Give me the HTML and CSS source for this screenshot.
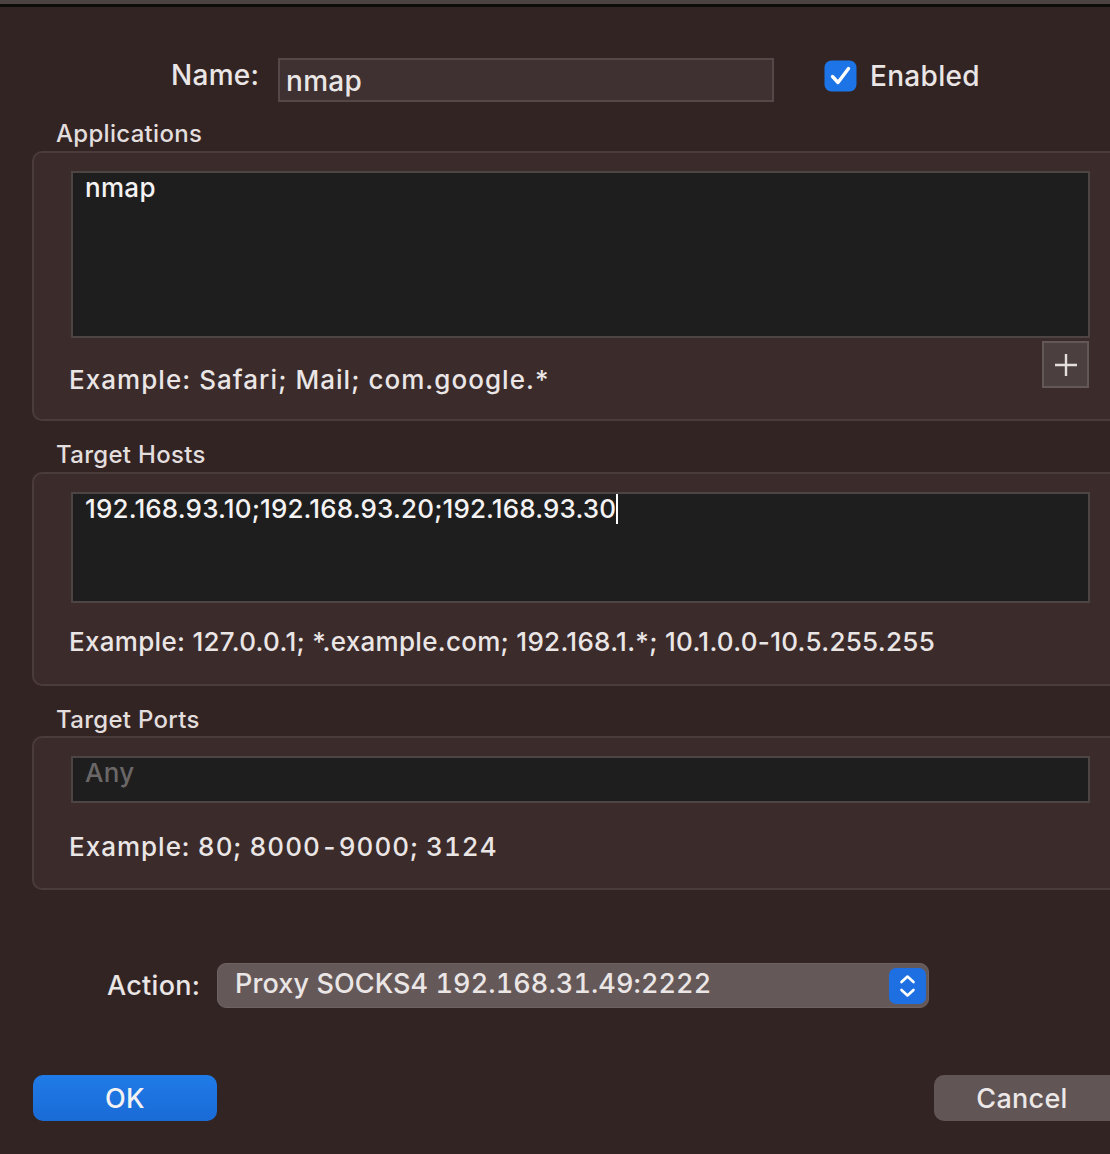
FILE: index.html
```html
<!DOCTYPE html>
<html>
<head>
<meta charset="utf-8">
<link rel="stylesheet" href="styles.css">
</head>
<body>
<div class="topbar"></div>
<div class="dialog">
  <div class="name-row">
    <span class="name-label">Name:</span>
    <div class="name-field">nmap</div>
    <div class="check">
      <svg width="33" height="32" viewBox="0 0 33 32"><rect x="0.5" y="0.5" width="32" height="31" rx="7" fill="#1c74e6"/><path d="M8.5 16.5 L14 22.5 L24.5 8.5" fill="none" stroke="#fff" stroke-width="3.4" stroke-linecap="round" stroke-linejoin="round"/></svg>
      <span class="check-label">Enabled</span>
    </div>
  </div>

  <div class="section-label lbl-apps">Applications</div>
  <div class="group g-apps">
    <div class="textbox tb-apps">nmap</div>
    <div class="foot-row">
      <span class="example ex-apps">Example: Safari; Mail; com.google.*</span>
      <div class="plus-btn">
        <svg width="26" height="26" viewBox="0 0 26 26"><path d="M13 2 V24 M2 13 H24" stroke="#e4dede" stroke-width="2.4"/></svg>
      </div>
    </div>
  </div>

  <div class="section-label lbl-hosts">Target Hosts</div>
  <div class="group g-hosts">
    <div class="textbox tb-hosts">192.168.93.10;192.168.93.20;192.168.93.30<span class="caret"></span></div>
    <div class="example ex-hosts">Example: 127.0.0.1; *.example.com; 192.168.1.*; 10.1.0.0-10.5.255.255</div>
  </div>

  <div class="section-label lbl-ports">Target Ports</div>
  <div class="group g-ports">
    <div class="textbox tb-ports"><span class="placeholder">Any</span></div>
    <div class="example ex-ports">Example: 80; 8000-9000; 3124</div>
  </div>

  <div class="action-row">
    <span class="action-label">Action:</span>
    <div class="popup">
      <span class="popup-text">Proxy SOCKS4 192.168.31.49:2222</span>
      <div class="stepper">
        <svg width="37" height="36" viewBox="0 0 37 36"><rect x="0" y="0" width="37" height="36" rx="7" fill="#1d6fe2"/><path d="M12.5 14 L18.5 8.5 L24.5 14 M12.5 22 L18.5 27.5 L24.5 22" fill="none" stroke="#fff" stroke-width="2.6" stroke-linecap="round" stroke-linejoin="round"/></svg>
      </div>
    </div>
  </div>

  <div class="button-row">
    <div class="btn ok">OK</div>
    <div class="btn cancel">Cancel</div>
  </div>
</div>
</body>
</html>
```
FILE: styles.css
```css
html, body {
  margin: 0;
  padding: 0;
}
body {
  width: 1110px;
  height: 1154px;
  overflow: hidden;
  background: #332424;
  font-family: "Inter", "Liberation Sans", sans-serif;
  font-weight: 500;
  letter-spacing: 0.3px;
  color: #ebe6e6;
}
.topbar {
  height: 4px;
  background: #4b4242;
  border-bottom: 3px solid #0e0b0b;
}
.dialog {
  display: flex;
  flex-direction: column;
}
.name-row {
  display: flex;
  align-items: center;
  margin-top: 51px;
  height: 43px;
}
.name-label {
  margin-left: 171px;
  width: 107px;
  font-size: 28px;
  position: relative;
  top: -5px;
}
.name-field {
  box-sizing: border-box;
  width: 496px;
  height: 44px;
  background: #3f3131;
  border: 2px solid #564848;
  font-size: 28px;
  padding: 3px 0 0 6px;
  line-height: 36px;
}
.check {
  display: flex;
  align-items: center;
  margin-left: 50px;
  position: relative;
  top: -4px;
}
.check svg { display: block; }
.check-label {
  font-size: 28px;
  margin-left: 13px;
}
.section-label {
  font-size: 24px;
  margin-left: 56px;
  height: 26px;
  line-height: 26px;
  color: #e3dede;
}
.lbl-apps { margin-top: 20px; }
.lbl-hosts { margin-top: 21px; }
.lbl-ports { margin-top: 21px; }
.group {
  box-sizing: border-box;
  margin-left: 32px;
  width: 1100px;
  background: #3b2b2b;
  border: 2px solid #4b3c3c;
  border-radius: 10px;
  padding: 18px 0 0 37px;
}
.g-apps { height: 270px; margin-top: 4px; }
.g-hosts { height: 214px; margin-top: 4px; }
.g-ports { height: 154px; margin-top: 3px; }
.textbox {
  box-sizing: border-box;
  width: 1019px;
  background: #1e1e1e;
  border: 2px solid #4d4444;
  font-size: 26px;
  color: #f4f2f2;
  padding: 0 0 0 12px;
}
.tb-apps { height: 167px; line-height: 30px; }
.tb-hosts { height: 111px; line-height: 30px; letter-spacing: 0.15px; }
.tb-ports { height: 47px; line-height: 30px; }
.caret {
  display: inline-block;
  width: 2px;
  height: 30px;
  background: #fff;
  vertical-align: top;
}
.placeholder { color: #6b6767; }
.foot-row {
  display: flex;
  align-items: flex-start;
  width: 1019px;
  justify-content: space-between;
}
.example {
  font-size: 26px;
  color: #ebe6e6;
  margin-left: -2px;
}
.ex-apps { margin-top: 26px; letter-spacing: 1.05px; }
.ex-hosts { margin-top: 23px; letter-spacing: 0.3px; }
.ex-ports { margin-top: 28px; letter-spacing: 1px; font-variant-numeric: tabular-nums; }
.plus-btn {
  box-sizing: border-box;
  width: 47px;
  height: 47px;
  margin-top: 3px;
  margin-right: 1px;
  background: #4b3f3f;
  border: 2px solid #635858;
  display: flex;
  align-items: center;
  justify-content: center;
}
.plus-btn svg { display: block; }
.action-row {
  display: flex;
  align-items: center;
  margin-top: 73px;
}
.action-label {
  margin-left: 107px;
  width: 110px;
  font-size: 27px;
}
.popup {
  box-sizing: border-box;
  width: 712px;
  height: 45px;
  background: #655858;
  border: 1px solid #6f6262;
  border-radius: 9px;
  display: flex;
  align-items: center;
  justify-content: space-between;
  padding: 0 2px 0 17px;
}
.popup-text {
  font-size: 27px;
  font-variant-numeric: tabular-nums;
  letter-spacing: 0.1px;
  position: relative;
  top: -2px;
}
.stepper svg { display: block; }
.button-row {
  display: flex;
  justify-content: space-between;
  margin-top: 67px;
}
.btn {
  box-sizing: border-box;
  height: 46px;
  border-radius: 10px;
  font-size: 27px;
  display: flex;
  align-items: center;
  justify-content: center;
}
.ok {
  margin-left: 33px;
  width: 184px;
  background: linear-gradient(#1f7be8, #1a6bd6);
  color: #f2f2f2;
}
.cancel {
  width: 200px;
  margin-right: -24px;
  background: #625555;
  color: #ece8e8;
  padding-right: 24px;
}
```
